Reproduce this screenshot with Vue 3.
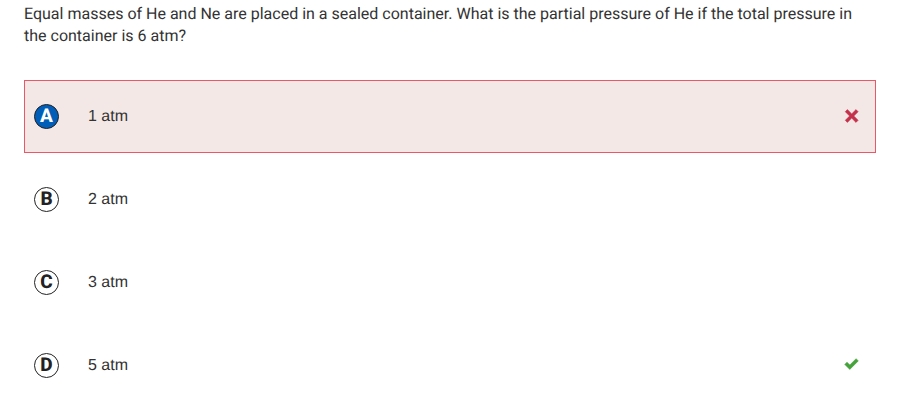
<script setup>
import { ref } from 'vue'

const selected = ref('A')
const choices = [
  { letter: 'A', text: '1 atm', mark: 'wrong' },
  { letter: 'B', text: '2 atm' },
  { letter: 'C', text: '3 atm' },
  { letter: 'D', text: '5 atm', mark: 'right' },
]
</script>

<template>
  <form class="question">
    <fieldset class="choices">
      <legend class="prompt">Equal masses of He and Ne are placed in a sealed container. What is the partial pressure of He if the total pressure in the container is 6 atm?</legend>
      <label
        v-for="choice in choices"
        :key="choice.letter"
        class="choice"
        :class="{ wrong: choice.mark === 'wrong', selected: selected === choice.letter }"
      >
        <input v-model="selected" class="radio" type="radio" name="answer" :value="choice.letter" />
        <span class="letter">{{ choice.letter }}</span>
        <span class="text">{{ choice.text }}</span>
        <svg v-if="choice.mark === 'wrong'" class="mark" viewBox="0 0 16 16" aria-hidden="true">
          <path d="M3.4 1.6 7.7 5.9 12 1.6 14.1 3.7 9.8 8 14.1 12.3 12 14.4 7.7 10.1 3.4 14.4 1.3 12.3 5.6 8 1.3 3.7Z" fill="#c4314b" stroke="#c4314b" stroke-width="0.6" stroke-linejoin="round" />
        </svg>
        <svg v-if="choice.mark === 'right'" class="mark" viewBox="0 0 16 16" aria-hidden="true">
          <path d="M.8 7.4 3 5.2 5.8 8 12.1 1.7 14.3 3.9 5.8 12.4Z" fill="#46a33c" stroke="#46a33c" stroke-width="0.6" stroke-linejoin="round" />
        </svg>
      </label>
    </fieldset>
  </form>
</template>

<style>
body {
  background: #fff;
}
</style>

<style scoped>
.question {
  padding: 3px 39px 0 24px;
  color: #333;
  text-rendering: geometricPrecision;
}
.choices {
  display: flex;
  flex-direction: column;
  gap: 10px;
  margin: 0;
  padding: 0;
  border: 0;
  min-width: 0;
}
.prompt {
  padding: 0 0 33px;
  font: 16px/22px Roboto, sans-serif;
}
.choice {
  display: flex;
  align-items: flex-start;
  box-sizing: border-box;
  padding: 23px 15px 23px 9px;
  border: 1px solid transparent;
  cursor: pointer;
}
.wrong {
  border-color: #ea5867;
  background: #f4e8e7;
}
.radio {
  appearance: none;
  width: 0;
  height: 0;
  margin: 0;
}
.letter {
  box-sizing: border-box;
  width: 25px;
  height: 25px;
  margin-right: 29px;
  border: 1px solid #222;
  border-radius: 50%;
  background: #fff;
  color: #222;
  font: 800 19px/22px Roboto, sans-serif;
  text-align: center;
}
.selected .letter {
  background: #005eb8;
  color: #fff;
}
.text {
  flex: 1;
  font: 16px/25px "Liberation Sans", Arial, sans-serif;
}
.mark {
  width: 16px;
  height: 24px;
}
</style>
